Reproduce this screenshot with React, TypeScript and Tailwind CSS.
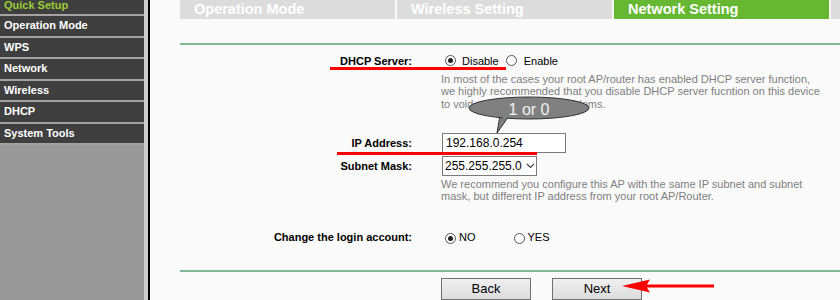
import React from 'react';

const menu = ['Operation Mode', 'WPS', 'Network', 'Wireless', 'DHCP', 'System Tools'];
const tabs = ['Operation Mode', 'Wireless Setting', 'Network Setting'];

const Radio: React.FC<{ checked?: boolean }> = ({ checked }) => (
  <span className="w-[11px] h-[11px] rounded-full border border-[#555] bg-white flex items-center justify-center shrink-0">
    {checked && <span className="w-[5px] h-[5px] rounded-full bg-[#222]" />}
  </span>
);

const Label: React.FC<{ children: React.ReactNode }> = ({ children }) => (
  <div className="w-[262px] mr-[28px] text-right font-bold text-[11px] text-black shrink-0">{children}</div>
);

const App: React.FC = () => {
  return (
    <div className="w-[840px] h-[300px] overflow-hidden flex bg-[#fafafa]" style={{ fontFamily: '"Liberation Sans", Arial, sans-serif' }}>
      {/* sidebar */}
      <div className="flex shrink-0">
        <div className="w-[144px] bg-[#999999] flex flex-col">
          <div className="h-[16px] bg-[#3f3f3f] border-b-2 border-[#a3a3a3] flex items-end pl-[4px] pb-[3px] text-[11px] font-bold text-[#99cc33] leading-none">
            Quick Setup
          </div>
          {menu.map(m => (
            <div key={m} className="h-[21.5px] bg-[#3f3f3f] border-b-2 border-[#a3a3a3] flex items-center pl-[4px] text-[11px] font-bold text-white leading-none">
              {m}
            </div>
          ))}
        </div>
        <div className="w-[4px] bg-[#cdcdcd]" />
        <div className="w-[2px] bg-black" />
      </div>

      {/* main */}
      <div className="relative flex-1 flex flex-col">
        <div className="flex gap-[2px] pl-[30px] h-[19px]">
          {tabs.map((t, i) => (
            <div
              key={t}
              className={`w-[215px] flex items-center pl-[14px] text-[14.5px] font-bold text-white leading-none ${i === 2 ? 'bg-[#66b833]' : 'bg-[#dcdcdc]'}`}
            >
              {t}
            </div>
          ))}
          <div className="flex-1 bg-[#dcdcdc]" />
        </div>
        <div className="ml-[30px] mt-[24px] h-[2px] bg-[#7fb695]" />

        {/* DHCP Server */}
        <div className="mt-[6px] h-[20px] flex items-center">
          <Label>DHCP Server:</Label>
          <div className="flex items-center text-[11px] text-black">
            <span className="ml-[5px]"><Radio checked /></span>
            <span className="ml-[6px]">Disable</span>
            <span className="ml-[7px]"><Radio /></span>
            <span className="ml-[7px]">Enable</span>
          </div>
        </div>
        <div className="mt-[2px] ml-[291px] text-[11px] leading-[12.5px] text-[#808080]">
          In most of the cases your root AP/router has enabled DHCP server function,<br />
          we highly recommended that you disable DHCP server fucntion on this device<br />
          to void any unexpected problems.
        </div>

        {/* IP Address */}
        <div className="mt-[23px] h-[20px] flex items-center">
          <Label>IP Address:</Label>
          <div className="ml-[2px] w-[124px] h-[20px] border border-[#7a7a7a] bg-white flex items-center pl-[3px] text-[12px] text-black">
            192.168.0.254
          </div>
        </div>

        {/* Subnet Mask */}
        <div className="mt-[3px] h-[20px] flex items-center">
          <Label>Subnet Mask:</Label>
          <div className="ml-[2px] w-[95px] h-[20px] border border-[#7a7a7a] bg-white flex items-center pl-[2px] text-[12px] text-black">
            255.255.255.0
            <svg width="9" height="6" viewBox="0 0 9 6" className="ml-[4px]">
              <path d="M1 1 L4.5 4.5 L8 1" fill="none" stroke="#444" strokeWidth="1.2" />
            </svg>
          </div>
        </div>
        <div className="mt-[2px] ml-[291px] text-[11px] leading-[12px] text-[#808080]">
          We recommend you configure this AP with the same IP subnet and subnet<br />
          mask, but different IP address from your root AP/Router.
        </div>

        {/* login account */}
        <div className="mt-[25px] h-[20px] flex items-center">
          <Label>Change the login account:</Label>
          <div className="flex items-center text-[11px] text-black">
            <span className="ml-[5px] mt-[3px]"><Radio checked /></span>
            <span className="ml-[3px]">NO</span>
            <span className="ml-[38px] mt-[3px]"><Radio /></span>
            <span className="ml-[3px]">YES</span>
          </div>
        </div>

        <div className="ml-[30px] mt-[23px] h-[2px] bg-[#7fb695]" />

        <div className="mt-[6px] ml-[291px] flex gap-[21px]">
          <button className="w-[90px] h-[22px] border border-[#707070] bg-gradient-to-b from-[#f0f0f0] to-[#dcdcdc] text-[13px] text-black">
            Back
          </button>
          <button className="w-[90px] h-[22px] border border-[#707070] bg-gradient-to-b from-[#f0f0f0] to-[#dcdcdc] text-[13px] text-black">
            Next
          </button>
        </div>

        {/* annotations */}
        <div className="absolute left-[180px] top-[67px] w-[176px] h-[3px] bg-[#ff0000]" />
        <div className="absolute left-[187px] top-[152px] w-[200px] h-[3px] bg-[#ff0000]" />

        <svg className="absolute left-[315px] top-[94px]" width="130" height="42" viewBox="0 0 130 42">
          <polygon points="35,21 44,22 32,39" fill="#808080" stroke="#333" strokeWidth="1" />
          <ellipse cx="64" cy="14" rx="60" ry="11" fill="#808080" stroke="#333" strokeWidth="1" />
          <polygon points="36,22 43,23 40,26" fill="#808080" />
          <text x="64" y="21" textAnchor="middle" fontSize="16" fill="#f2f2f2" fontFamily="Liberation Sans, Arial, sans-serif">
            1 or 0
          </text>
        </svg>

        <svg className="absolute left-[472px] top-[278px]" width="94" height="16" viewBox="0 0 94 16">
          <line x1="24" y1="8" x2="92" y2="8" stroke="#ff0000" strokeWidth="3" />
          <polygon points="0,8 28,1.5 24,8 28,14.5" fill="#ff0000" />
        </svg>
      </div>
    </div>
  );
};

export default App;
